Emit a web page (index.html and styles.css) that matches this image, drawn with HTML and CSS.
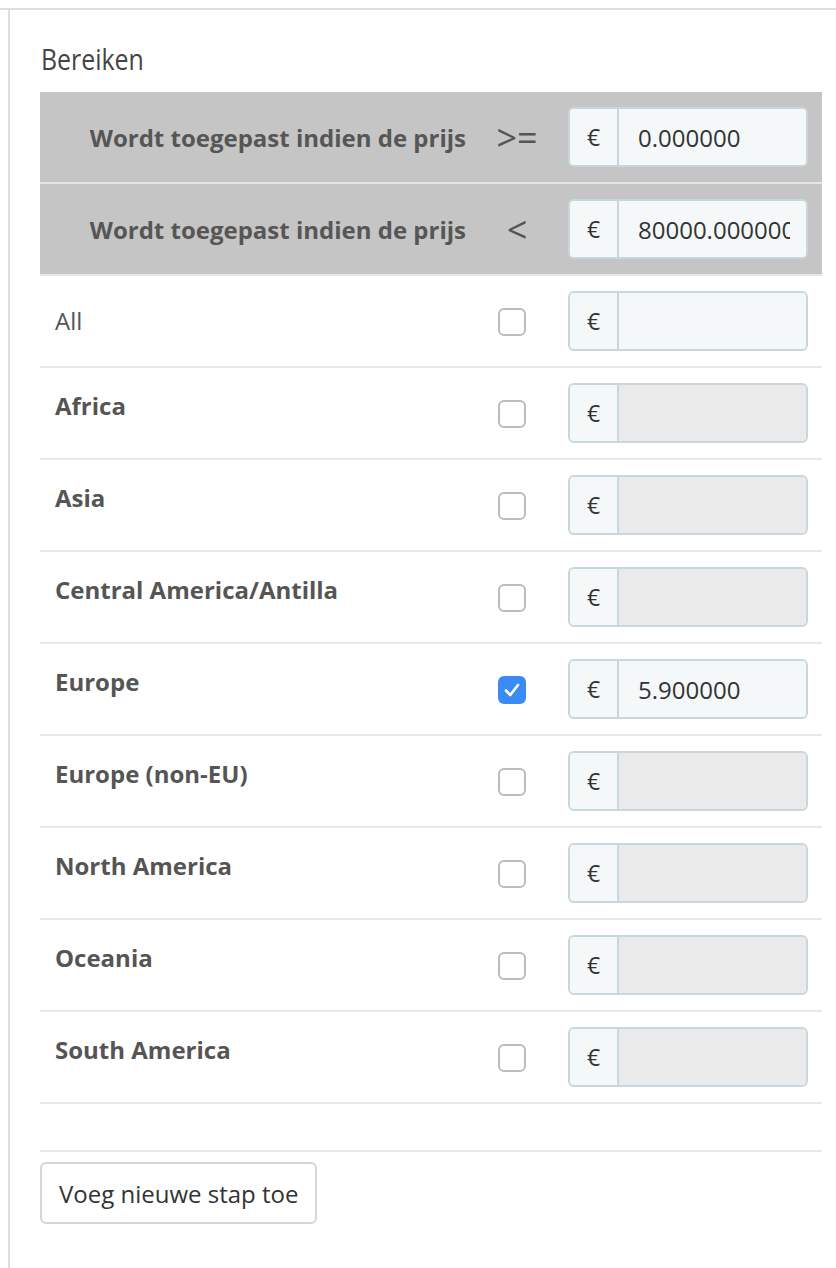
FILE: index.html
```html
<!DOCTYPE html>
<html lang="nl">
<head>
<meta charset="utf-8">
<title>Bereiken</title>
<link rel="stylesheet" href="styles.css">
</head>
<body>
<div class="frame">
  <div class="panel">
    <h3 class="heading"><span class="heading-text">Bereiken</span></h3>
    <div class="ranges">
      <div class="row head-row">
        <div class="cell head-label">Wordt toegepast indien de prijs</div>
        <div class="cell op">&gt;=</div>
        <div class="cell field">
          <div class="group"><span class="addon">€</span><input class="value" type="text" value="0.000000" readonly></div>
        </div>
      </div>
      <div class="row head-row">
        <div class="cell head-label">Wordt toegepast indien de prijs</div>
        <div class="cell op">&lt;</div>
        <div class="cell field">
          <div class="group"><span class="addon">€</span><input class="value" type="text" value="80000.000000" readonly></div>
        </div>
      </div>
      <div class="row">
        <div class="cell label plain">All</div>
        <div class="cell check"><span class="box"></span></div>
        <div class="cell field">
          <div class="group"><span class="addon">€</span><input class="value" type="text" value="" readonly></div>
        </div>
      </div>
      <div class="row">
        <div class="cell label">Africa</div>
        <div class="cell check"><span class="box"></span></div>
        <div class="cell field">
          <div class="group"><span class="addon">€</span><input class="value off" type="text" value="" disabled></div>
        </div>
      </div>
      <div class="row">
        <div class="cell label">Asia</div>
        <div class="cell check"><span class="box"></span></div>
        <div class="cell field">
          <div class="group"><span class="addon">€</span><input class="value off" type="text" value="" disabled></div>
        </div>
      </div>
      <div class="row">
        <div class="cell label">Central America/Antilla</div>
        <div class="cell check"><span class="box"></span></div>
        <div class="cell field">
          <div class="group"><span class="addon">€</span><input class="value off" type="text" value="" disabled></div>
        </div>
      </div>
      <div class="row">
        <div class="cell label">Europe</div>
        <div class="cell check"><span class="box on"><svg viewBox="0 0 28 28" width="28" height="28"><path d="M8 14.5 L12.3 19 L20 9" fill="none" stroke="#fff" stroke-width="2.6" stroke-linecap="round" stroke-linejoin="round"/></svg></span></div>
        <div class="cell field">
          <div class="group"><span class="addon">€</span><input class="value" type="text" value="5.900000" readonly></div>
        </div>
      </div>
      <div class="row">
        <div class="cell label">Europe (non-EU)</div>
        <div class="cell check"><span class="box"></span></div>
        <div class="cell field">
          <div class="group"><span class="addon">€</span><input class="value off" type="text" value="" disabled></div>
        </div>
      </div>
      <div class="row">
        <div class="cell label">North America</div>
        <div class="cell check"><span class="box"></span></div>
        <div class="cell field">
          <div class="group"><span class="addon">€</span><input class="value off" type="text" value="" disabled></div>
        </div>
      </div>
      <div class="row">
        <div class="cell label">Oceania</div>
        <div class="cell check"><span class="box"></span></div>
        <div class="cell field">
          <div class="group"><span class="addon">€</span><input class="value off" type="text" value="" disabled></div>
        </div>
      </div>
      <div class="row">
        <div class="cell label">South America</div>
        <div class="cell check"><span class="box"></span></div>
        <div class="cell field">
          <div class="group"><span class="addon">€</span><input class="value off" type="text" value="" disabled></div>
        </div>
      </div>
      <div class="foot-row"></div>
    </div>
    <button class="add-btn" type="button">Voeg nieuwe stap toe</button>
  </div>
</div>
</body>
</html>
```

FILE: styles.css
```css
html, body {
  margin: 0;
  padding: 0;
  background: #fff;
}
body {
  font-family: "Open Sans", "Liberation Sans", sans-serif;
  color: #555;
  padding-top: 8px;
  overflow: hidden;
}
.frame {
  border-top: 2px solid #dedede;
}
.panel {
  box-sizing: border-box;
  margin-left: 8px;
  border-left: 2px solid #dedede;
  padding: 0 14px 0 30px;
  height: 1258px;
}
.heading {
  margin: 0;
  padding: 31px 0 15px 1px;
  font-family: "Ubuntu Condensed", "Liberation Sans Narrow", "Open Sans", sans-serif;
  font-weight: normal;
  font-size: 30px;
  line-height: 36px;
  color: #444;
}
.heading-text {
  display: inline-block;
  transform: scaleX(0.83);
  transform-origin: 0 50%;
}
.ranges {
  display: flex;
  flex-direction: column;
}
.row {
  display: grid;
  grid-template-columns: 431px 82px 1fr;
  height: 90px;
  border-bottom: 2px solid #e6e9ec;
}
.head-row {
  background: #c5c5c5;
  border-bottom-color: #e3e7ea;
}
.cell {
  display: flex;
  align-items: center;
}
.head-label {
  justify-content: flex-end;
  padding-right: 5px;
  font-weight: bold;
  font-size: 24px;
  color: #565656;
}
.op {
  justify-content: center;
  padding-left: 10px;
  font-size: 36px;
  color: #555;
}
.label {
  align-items: flex-start;
  padding: 21px 0 0 15px;
  font-size: 24px;
  line-height: 34px;
  font-weight: bold;
  color: #555;
}
.label.plain {
  align-items: center;
  padding-top: 0;
  font-weight: normal;
}
.check {
  justify-content: center;
}
.box {
  box-sizing: border-box;
  width: 28px;
  height: 28px;
  border: 2px solid #bcbcbc;
  border-radius: 6px;
  background: #fff;
  display: block;
  margin-top: 2px;
}
.box.on {
  border: none;
  background: #3a8bf6;
}
.box svg {
  display: block;
}
.field {
  justify-content: flex-end;
  padding-right: 14px;
}
.group {
  box-sizing: border-box;
  width: 240px;
  height: 60px;
  display: flex;
  border: 2px solid #c8d6dd;
  border-radius: 6px;
  overflow: hidden;
  background: #f5f8f9;
}
.addon {
  width: 47px;
  flex: none;
  border-right: 2px solid #c8d6dd;
  background: #f5f8f9;
  display: flex;
  align-items: center;
  justify-content: center;
  font-size: 23px;
  color: #333;
}
.value {
  flex: 1;
  min-width: 0;
  border: none;
  outline: none;
  margin: 0;
  padding: 0 16px 0 19px;
  background: #f5f8f9;
  font-family: "Open Sans", "Liberation Sans", sans-serif;
  font-size: 24px;
  color: #333;
}
.value.off {
  background: #eaeaea;
}
.foot-row {
  height: 46px;
  border-bottom: 2px solid #e6e9ec;
}
.add-btn {
  margin-top: 10px;
  box-sizing: border-box;
  height: 62px;
  padding: 0 17px;
  border: 2px solid #d6d6d6;
  border-radius: 6px;
  background: #fff;
  font-family: "Open Sans", "Liberation Sans", sans-serif;
  font-size: 24px;
  color: #333;
  cursor: pointer;
}
```
